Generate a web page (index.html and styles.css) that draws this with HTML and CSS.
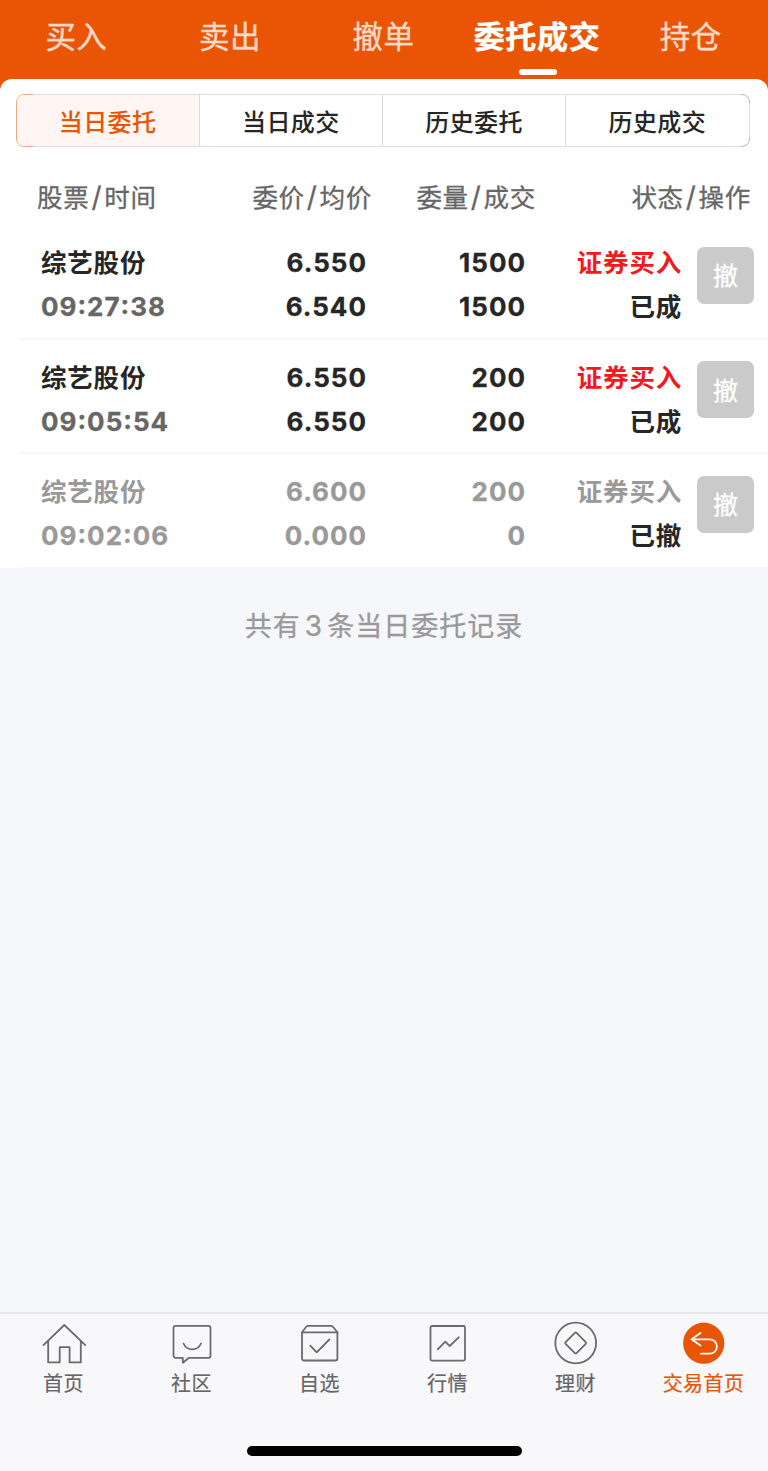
FILE: index.html
```html
<!DOCTYPE html>
<html lang="zh-CN">
<head>
    <meta charset="UTF-8">
    <meta name="viewport" content="width=device-width, initial-scale=1.0">
    <title>委托成交</title>
    <link rel="stylesheet" href="styles.css">
</head>
<body>
    <div class="app">
        <nav class="top-tabs">
            <a class="top-tab">买入</a>
            <a class="top-tab">卖出</a>
            <a class="top-tab">撤单</a>
            <a class="top-tab active">委托成交</a>
            <a class="top-tab">持仓</a>
        </nav>

        <main class="content">
            <section class="card">
                <div class="segment">
                    <button class="segment-item active">当日委托</button>
                    <button class="segment-item">当日成交</button>
                    <button class="segment-item">历史委托</button>
                    <button class="segment-item">历史成交</button>
                </div>

                <div class="list-head">
                    <span>股票<i>/</i>时间</span>
                    <span>委价<i>/</i>均价</span>
                    <span>委量<i>/</i>成交</span>
                    <span>状态<i>/</i>操作</span>
                </div>

                <div class="order">
                    <div class="cell name"><span>综艺股份</span><span class="time">09<i>:</i>27<i>:</i>38</span></div>
                    <div class="cell num"><span>6.550</span><span>6.540</span></div>
                    <div class="cell num"><span>1500</span><span>1500</span></div>
                    <div class="cell"><span class="buy">证券买入</span><span class="status">已成</span></div>
                    <button class="cancel">撤</button>
                </div>
                <div class="order">
                    <div class="cell name"><span>综艺股份</span><span class="time">09<i>:</i>05<i>:</i>54</span></div>
                    <div class="cell num"><span>6.550</span><span>6.550</span></div>
                    <div class="cell num"><span>200</span><span>200</span></div>
                    <div class="cell"><span class="buy">证券买入</span><span class="status">已成</span></div>
                    <button class="cancel">撤</button>
                </div>
                <div class="order revoked">
                    <div class="cell name"><span>综艺股份</span><span class="time">09<i>:</i>02<i>:</i>06</span></div>
                    <div class="cell num"><span>6.600</span><span>0.000</span></div>
                    <div class="cell num"><span>200</span><span>0</span></div>
                    <div class="cell"><span class="buy">证券买入</span><span class="status">已撤</span></div>
                    <button class="cancel">撤</button>
                </div>
            </section>

            <p class="summary">共有<b>3</b>条当日委托记录</p>
        </main>

        <footer class="bottom-bar">
            <div class="bottom-nav">
                <a class="nav-item">
                    <svg class="nav-icon" viewBox="0 0 44 44">
                        <path d="M1.5 24.2 22.3 4l21 20.2M6.2 20v21.4h11.5V26.2h9.9v15.2h11.2V20"/>
                    </svg>
                    <span>首页</span>
                </a>
                <a class="nav-item">
                    <svg class="nav-icon" viewBox="0 0 44 44">
                        <path d="M5.5 4.8h33a2 2 0 0 1 2 2v28a2 2 0 0 1-2 2H19l-6.2 5v-5H5.5a2 2 0 0 1-2-2v-28a2 2 0 0 1 2-2z"/>
                        <path d="M13.5 22.5c3.5 7.8 14 7.8 17.5 0"/>
                    </svg>
                    <span>社区</span>
                </a>
                <a class="nav-item">
                    <svg class="nav-icon" viewBox="0 0 44 44">
                        <path d="M4 11.3 8.2 5.8Q9 4.8 10.2 4.8H32.8Q34 4.8 34.9 5.8L39.4 11.3"/>
                        <path d="M4 11.3h35.4v26.2a2 2 0 0 1-2 2H6a2 2 0 0 1-2-2z"/>
                        <path d="M12.3 24.7l6.4 6.6 12.6-12.8"/>
                    </svg>
                    <span>自选</span>
                </a>
                <a class="nav-item">
                    <svg class="nav-icon" viewBox="0 0 44 44">
                        <rect x="4.5" y="5" width="34.5" height="34.6" rx="1.5"/>
                        <path d="M11.7 28.3l7.6-7.6 4.4 4.3 9-8.7"/>
                    </svg>
                    <span>行情</span>
                </a>
                <a class="nav-item">
                    <svg class="nav-icon" viewBox="0 0 44 44">
                        <circle cx="21.7" cy="22" r="20.4"/>
                        <rect x="14" y="14.3" width="15.4" height="15.4" rx="1.2" transform="rotate(45 21.7 22)"/>
                    </svg>
                    <span>理财</span>
                </a>
                <a class="nav-item active">
                    <svg class="nav-icon" viewBox="0 0 44 44">
                        <circle class="disc" cx="21.7" cy="22.2" r="20.6"/>
                        <path class="arrow" d="M18.5 12l-9 6.3 9 6.2M9.5 18.3h18.2a7.2 7.2 0 0 1 0 14.4H19"/>
                    </svg>
                    <span>交易首页</span>
                </a>
            </div>
            <div class="home-indicator"></div>
        </footer>
    </div>
</body>
</html>
```

FILE: styles.css
```css
* {
    box-sizing: border-box;
}

body {
    margin: 0;
    font-family: Inter, "Noto Sans CJK SC", sans-serif;
    color: #262626;
    background-color: #f6f7fa;
}

button {
    margin: 0;
    padding: 0;
    border: none;
    background: none;
    font-family: inherit;
    color: inherit;
}

.app {
    display: flex;
    flex-direction: column;
    width: 768px;
    height: 1471px;
    overflow: hidden;
}

/* Top tabs */

.top-tabs {
    display: flex;
    height: 91px;
    background-color: #e95504;
}

.top-tab {
    position: relative;
    flex: 1 0 0;
    height: 74px;
    line-height: 74px;
    text-align: center;
    white-space: nowrap;
    font-size: 30.5px;
    letter-spacing: 0.4px;
    text-indent: -1px;
    color: #fbd9c6;
    -webkit-text-stroke: 0.4px;
}

.top-tab.active {
    font-size: 31px;
    font-weight: 700;
    letter-spacing: 0.7px;
    color: #fff;
}

.top-tab.active::after {
    content: "";
    position: absolute;
    left: 50%;
    bottom: -1px;
    width: 38px;
    height: 6px;
    margin-left: -19px;
    border-radius: 3px;
    background-color: #fff;
}

/* Orders */

.content {
    flex: 1;
    margin-top: -12px;
}

.card {
    padding-top: 15px;
    border-radius: 12px 12px 0 0;
    background-color: #fff;
}

.segment {
    position: relative;
    display: flex;
    width: 734px;
    height: 53px;
    margin-left: 15.5px;
    border: 1px solid #eda888;
    border-radius: 8px;
}

/* grey edges, only the corners stay orange */
.segment::before {
    content: "";
    position: absolute;
    top: -1px;
    bottom: -1px;
    left: 16px;
    right: 8px;
    border: 1px solid #dddee5;
    border-width: 1px 0;
}

.segment::after {
    content: "";
    position: absolute;
    top: 8px;
    bottom: 8px;
    right: -1px;
    width: 1px;
    background-color: #dddee5;
}

.segment-item {
    flex: 1;
    padding-bottom: 1px;
    border-right: 1px solid #d9dae2;
    font-size: 24px;
    font-weight: 500;
    letter-spacing: 0.4px;
}

.segment-item:last-child {
    border-right: none;
}

.segment-item.active {
    border-radius: 7px 0 0 7px;
    color: #e95504;
    background-color: #fff5f2;
}

.list-head {
    display: grid;
    grid-template-columns: 163px 172px 164px 215px;
    height: 77px;
    padding-left: 37px;
    line-height: 101px;
    text-align: right;
    font-size: 25.5px;
    letter-spacing: 0.7px;
    color: #666;
    -webkit-text-stroke: 0.3px;
}

.list-head span:first-child {
    text-align: left;
}

.list-head i {
    margin: 0 2px;
    font-size: 28px;
    line-height: 1;
    font-style: normal;
}

.order {
    position: relative;
    display: grid;
    grid-template-columns: 159px 167px 159px 156px 57px;
    height: 114.6px;
    padding: 17px 0 0 41px;
    font-size: 25.5px;
    font-weight: 700;
    letter-spacing: 0.8px;
}

.order::after {
    content: "";
    position: absolute;
    left: 20px;
    right: 0;
    bottom: -1px;
    height: 2px;
    background-color: #f6f6f8;
}

.cell {
    display: flex;
    flex-direction: column;
    text-align: right;
    line-height: 44px;
}

.cell.name {
    text-align: left;
}

.cell span {
    height: 44px;
    white-space: nowrap;
}

.cell.num,
.time {
    font-size: 26px;
    letter-spacing: 1px;
    -webkit-text-stroke: 0.3px;
}

.time {
    color: #666;
}

.time i {
    font-style: normal;
    line-height: 1;
    vertical-align: 2px;
}

.buy {
    color: #f5191d;
}

.cancel {
    width: 57px;
    height: 57px;
    margin: 5.5px 0 0 15px;
    padding-bottom: 2px;
    border-radius: 7px;
    font-size: 25px;
    color: #fff;
    background-color: #cacaca;
    -webkit-text-stroke: 0.3px;
}

.revoked,
.revoked .time,
.revoked .buy {
    color: #999;
}

.revoked .status {
    color: #262626;
}

.summary {
    margin: 0;
    line-height: 117px;
    text-align: center;
    font-size: 27px;
    letter-spacing: 1px;
    color: #999;
    -webkit-text-stroke: 0.3px;
}

.summary b {
    margin: 0 4px;
    font-size: 28px;
    line-height: 1;
    font-weight: 400;
}

/* Bottom navigation */

.bottom-bar {
    height: 159px;
    border-top: 2px solid #e9e9ec;
    background-color: #f8f8fb;
}

.bottom-nav {
    display: flex;
    height: 132px;
    padding-top: 7px;
}

.nav-item {
    display: flex;
    flex-direction: column;
    align-items: center;
    flex: 1;
    font-size: 20px;
    line-height: 39px;
    letter-spacing: 0.4px;
    color: #666;
    -webkit-text-stroke: 0.2px;
}

.nav-item span {
    margin-right: 1px;
}

.nav-icon {
    width: 44px;
    height: 44px;
    fill: none;
    stroke: #6b6b6b;
    stroke-width: 1.8;
    stroke-linecap: round;
    stroke-linejoin: round;
}

.nav-item.active {
    color: #e95504;
}

.nav-icon .disc {
    fill: #e95504;
    stroke: none;
}

.nav-icon .arrow {
    stroke: #fff;
}

.home-indicator {
    width: 275px;
    height: 10px;
    margin: 0 auto;
    border-radius: 5px;
    background-color: #000;
}
```
